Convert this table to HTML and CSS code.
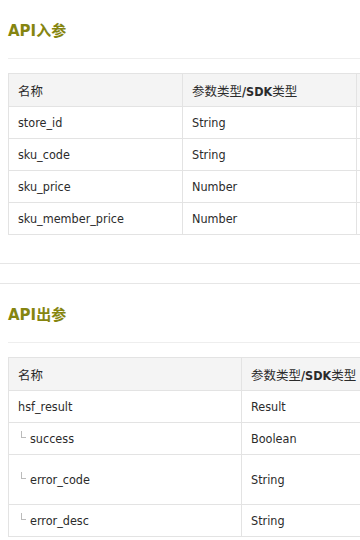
FILE: index.html
```html
<!DOCTYPE html>
<html lang="zh">
<head>
    <meta charset="UTF-8">
    <meta name="viewport" content="width=device-width, initial-scale=1.0">
    <title>API参数</title>
    <link rel="stylesheet" href="styles.css">
</head>
<body>
    <div class="section">
        <h2>API入参</h2>
        <table class="params params-in">
            <tr>
                <th class="col-name">名称</th>
                <th class="col-type">参数类型<b>/SDK</b>类型</th>
                <th class="col-desc"></th>
            </tr>
            <tr><td>store_id</td><td>String</td><td></td></tr>
            <tr><td>sku_code</td><td>String</td><td></td></tr>
            <tr><td>sku_price</td><td>Number</td><td></td></tr>
            <tr><td>sku_member_price</td><td>Number</td><td></td></tr>
        </table>
    </div>

    <div class="divider"></div>

    <div class="section">
        <h2>API出参</h2>
        <table class="params params-out">
            <tr>
                <th class="col-name">名称</th>
                <th class="col-type">参数类型<b>/SDK</b>类型</th>
                <th class="col-desc"></th>
            </tr>
            <tr><td>hsf_result</td><td>Result</td><td></td></tr>
            <tr><td><span class="tree"></span>success</td><td>Boolean</td><td></td></tr>
            <tr class="tall"><td><span class="tree"></span>error_code</td><td>String</td><td></td></tr>
            <tr><td><span class="tree"></span>error_desc</td><td>String</td><td></td></tr>
        </table>
    </div>
</body>
</html>
```

FILE: styles.css
```css
html, body {
    margin: 0;
    padding: 0;
    background: #fff;
    overflow: hidden;
}
body {
    font-family: "DejaVu Sans Condensed", "DejaVu Sans", Verdana, "Noto Sans CJK SC", sans-serif;
    font-size: 12.5px;
    color: #2b2b2b;
    width: 360px;
}
.section {
    padding-left: 8px;
}
h2 {
    margin: 0;
    padding: 20px 0 16px;
    line-height: 22px;
    font-family: "DejaVu Sans", "Noto Sans CJK SC", sans-serif;
    font-size: 15px;
    font-weight: bold;
    color: #858510;
    border-bottom: 1px solid #eee;
    width: 600px;
}
.params {
    margin-top: 14px;
    border-collapse: collapse;
    table-layout: fixed;
}
.params-in {
    width: 648px;
}
.params-out {
    width: 707px;
}
.params th,
.params td {
    box-sizing: border-box;
    border: 1px solid #e3e3e3;
    padding: 0 9px;
    height: 32px;
    text-align: left;
    white-space: nowrap;
    overflow: hidden;
    vertical-align: middle;
}
.params-in .col-name,
.params-in .col-type {
    width: 174px;
}
.params-out .col-name {
    width: 233px;
}
.params-out .col-type {
    width: 174px;
}
.params .col-desc {
    width: 300px;
}
.params th {
    background: #f4f4f4;
    font-weight: normal;
    height: 33px;
}
.params th b {
    font-weight: bold;
}
.params tr.tall td {
    height: 50px;
}
.tree {
    display: inline-block;
    width: 4px;
    height: 6px;
    border-left: 1px solid #bbb;
    border-bottom: 1px solid #bbb;
    margin: 0 4px 0 3px;
    vertical-align: 5px;
}
.divider {
    margin-top: 28px;
    height: 19px;
    border-top: 1px solid #e6e6e6;
    border-bottom: 1px solid #e6e6e6;
}
```
